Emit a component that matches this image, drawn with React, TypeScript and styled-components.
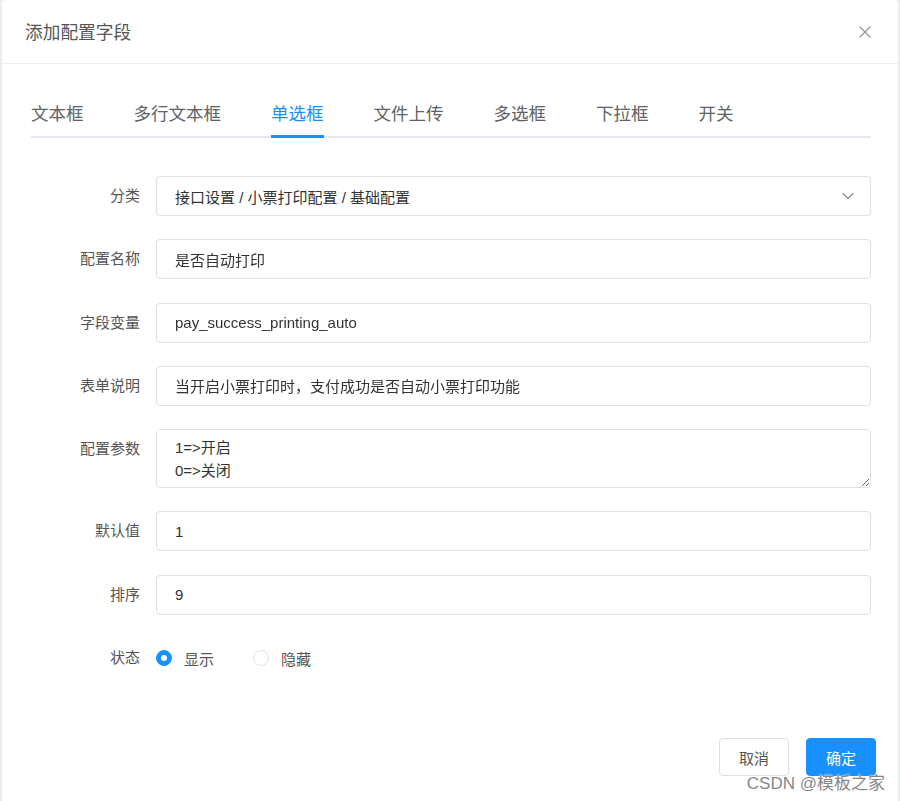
import React from "react"
import styled, { createGlobalStyle } from "styled-components"
import { X, ChevronDown } from "lucide-react"

const GlobalStyle = createGlobalStyle`
	html, body {
		margin: 0;
		padding: 0;
		background: #e9ecf2;
	}
	body {
		font-family: "Liberation Sans", "Noto Sans CJK SC", sans-serif;
		-webkit-font-smoothing: antialiased;
	}
	* {
		box-sizing: border-box;
	}
`

const Dialog = styled.div`
	position: relative;
	width: 896px;
	height: 801px;
	margin-left: 2px;
	background: #fff;
	border-radius: 4px 4px 0 0;
`

const Header = styled.div`
	height: 64px;
	padding: 0 23px;
	display: flex;
	align-items: center;
	justify-content: space-between;
	border-bottom: 1px solid #ebeef5;
`

const Title = styled.div`
	font-size: 17.7px;
	color: #555;
	margin-top: -2px;
`

const CloseButton = styled.button`
	border: none;
	background: none;
	padding: 0;
	margin-right: 0;
	display: flex;
	color: #909399;
	cursor: pointer;
`

const Body = styled.div`
	padding: 28px 27px 0 29px;
`

const TabBar = styled.div`
	display: flex;
	gap: 50px;
	border-bottom: 2px solid #e4e7ed;
`

const Tab = styled.div<{ $active?: boolean }>`
	position: relative;
	height: 44px;
	line-height: 44px;
	font-size: 17.5px;
	color: ${(p) => (p.$active ? "#1890ff" : "#606266")};
	cursor: pointer;

	&::after {
		content: "";
		position: absolute;
		left: 0;
		right: 0;
		bottom: -2px;
		height: 3px;
		background: ${(p) => (p.$active ? "#1890ff" : "transparent")};
	}
`

const Form = styled.div`
	margin-top: 38px;
	display: flex;
	flex-direction: column;
	gap: 23.3px;
`

const Row = styled.div`
	display: grid;
	grid-template-columns: 125px 1fr;
	align-items: start;
`

const Label = styled.div`
	text-align: right;
	padding-right: 16px;
	line-height: 40px;
	font-size: 15px;
	color: #555;
`

const InputBox = styled.div`
	position: relative;
	height: 40px;
	border: 1px solid #dcdfe6;
	border-radius: 4px;
	padding: 0 18px;
	display: flex;
	align-items: center;
	font-size: 15px;
	color: #333;
`

const Arrow = styled.span`
	position: absolute;
	right: 12px;
	top: 9px;
	display: flex;
	color: #8a8d93;
`

const TextArea = styled.textarea`
	display: block;
	width: 100%;
	height: 59px;
	border: 1px solid #dcdfe6;
	border-radius: 4px;
	padding: 6px 18px;
	font-family: inherit;
	font-size: 15px;
	line-height: 23px;
	color: #333;
	resize: vertical;
	outline: none;
`

const RadioGroup = styled.div`
	height: 40px;
	display: flex;
	align-items: center;
	gap: 39px;
`

const RadioItem = styled.label`
	display: flex;
	align-items: center;
	gap: 12px;
	font-size: 15px;
	color: #555;
	cursor: pointer;
`

const RadioCircle = styled.span<{ $checked?: boolean }>`
	width: 16px;
	height: 16px;
	border-radius: 50%;
	border: 1px solid ${(p) => (p.$checked ? "#1890ff" : "#dcdfe6")};
	background: ${(p) => (p.$checked ? "#1890ff" : "#fff")};
	display: flex;
	align-items: center;
	justify-content: center;

	&::after {
		content: "";
		width: 6px;
		height: 6px;
		border-radius: 50%;
		background: ${(p) => (p.$checked ? "#fff" : "transparent")};
	}
`

const Footer = styled.div`
	margin-top: 60px;
	padding: 0 22px;
	display: flex;
	justify-content: flex-end;
	gap: 17px;
`

const Button = styled.button<{ $primary?: boolean }>`
	width: 70px;
	height: 38px;
	border-radius: 4px;
	font-family: inherit;
	font-size: 15px;
	border: 1px solid ${(p) => (p.$primary ? "#1890ff" : "#dcdfe6")};
	background: ${(p) => (p.$primary ? "#1890ff" : "#fff")};
	color: ${(p) => (p.$primary ? "#fff" : "#555")};
	cursor: pointer;
`

const Watermark = styled.div`
	position: absolute;
	right: 13px;
	bottom: 7px;
	font-size: 17px;
	color: rgba(110, 110, 110, 0.85);
	text-shadow: 0 0 2px #fff, 0 0 1px #fff;
	pointer-events: none;
`

const tabs = ["文本框", "多行文本框", "单选框", "文件上传", "多选框", "下拉框", "开关"]

const Field = (props: { label: string; children: React.ReactNode }) => (
	<Row>
		<Label>{props.label}</Label>
		<div>{props.children}</div>
	</Row>
)

export default function App() {
	return (
		<>
			<GlobalStyle />
			<Dialog>
				<Header>
					<Title>添加配置字段</Title>
					<CloseButton>
						<X size={20} strokeWidth={1.4} />
					</CloseButton>
				</Header>
				<Body>
					<TabBar>
						{tabs.map((t) => (
							<Tab key={t} $active={t === "单选框"}>
								{t}
							</Tab>
						))}
					</TabBar>
					<Form>
						<Field label="分类">
							<InputBox>
								接口设置 / 小票打印配置 / 基础配置
								<Arrow>
									<ChevronDown size={20} strokeWidth={1.4} />
								</Arrow>
							</InputBox>
						</Field>
						<Field label="配置名称">
							<InputBox>是否自动打印</InputBox>
						</Field>
						<Field label="字段变量">
							<InputBox>pay_success_printing_auto</InputBox>
						</Field>
						<Field label="表单说明">
							<InputBox>当开启小票打印时，支付成功是否自动小票打印功能</InputBox>
						</Field>
						<Field label="配置参数">
							<TextArea defaultValue={"1=>开启\n0=>关闭"} />
						</Field>
						<Field label="默认值">
							<InputBox>1</InputBox>
						</Field>
						<Field label="排序">
							<InputBox>9</InputBox>
						</Field>
						<Field label="状态">
							<RadioGroup>
								<RadioItem>
									<RadioCircle $checked />
									显示
								</RadioItem>
								<RadioItem>
									<RadioCircle />
									隐藏
								</RadioItem>
							</RadioGroup>
						</Field>
					</Form>
				</Body>
				<Footer>
					<Button>取消</Button>
					<Button $primary>确定</Button>
				</Footer>
				<Watermark>CSDN @模板之家</Watermark>
			</Dialog>
		</>
	)
}
